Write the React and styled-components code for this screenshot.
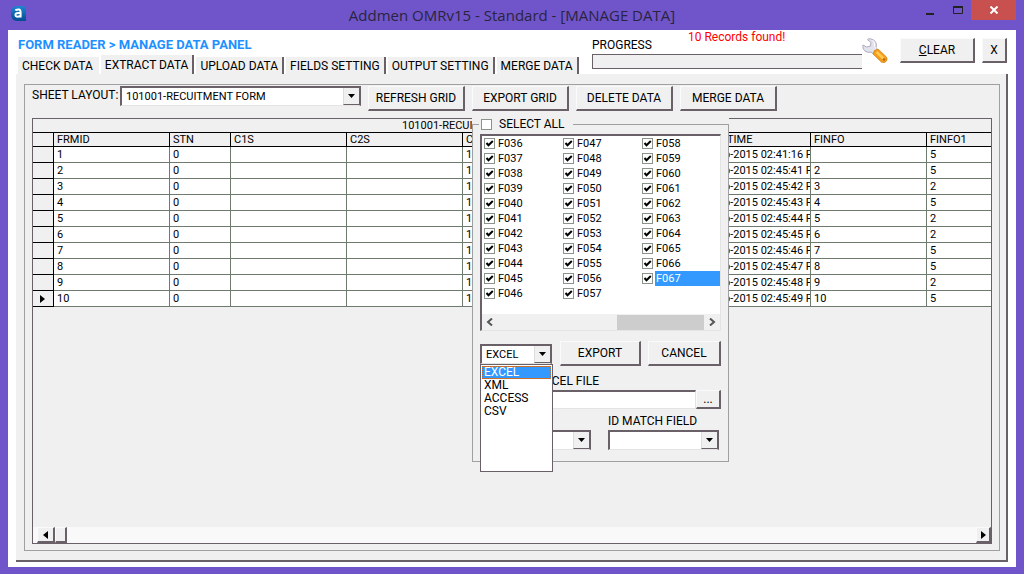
import React, { useState } from 'react'
import styled, { createGlobalStyle, css } from 'styled-components'

const face = '#f0f0f0'
const purple = '#6f55c9'
const dark = '#6a6068'
const line = '#a0a0a0'
const blue = '#3399ff'

const raised = css`
  border: solid;
  border-width: 1px 2px 2px 1px;
  border-color: #fafafa ${dark} ${dark} #fafafa;
  background: ${face};
`
const sunken = css`
  border: solid;
  border-width: 2px 1px 1px 2px;
  border-color: ${dark} #e4e4e4 #e4e4e4 ${dark};
  background: #fff;
`
const GlobalStyle = createGlobalStyle`
  * {
    box-sizing: border-box;
  }
  body {
    margin: 0;
    background: ${purple};
    color: #000;
    font: 12px/14px Roboto, Arial, sans-serif;
  }
  button, input, select {
    font: inherit;
    color: inherit;
    margin: 0;
    padding: 0;
    border-radius: 0;
  }
`
const Window = styled.div`
  display: flex;
  flex-direction: column;
  min-height: 100vh;
  padding: 0 8px 7px;
  background: ${purple};
`
const TitleBar = styled.header`
  display: grid;
  grid-template-columns: 100px 1fr 100px;
  height: 30px;
`
const Logo = styled.svg`
  margin: 6px 3px;
`
const WindowTitle = styled.h1`
  margin: 0;
  color: #2a2440;
  font: 15px/30px 'Open Sans', sans-serif;
  text-align: center;
  white-space: nowrap;
`
const WindowButtons = styled.div`
  display: flex;
  justify-content: flex-end;
  align-items: flex-start;
`
const WindowButton = styled.button`
  display: flex;
  align-items: center;
  justify-content: center;
  width: ${p => (p.$close ? 45 : 27)}px;
  height: 20px;
  border: 0;
  background: ${p => (p.$close ? '#c8504e' : 'transparent')};
`
const Client = styled.main`
  display: flex;
  flex-direction: column;
  flex: 1;
  padding: 0 8px 5px;
  background: #fff;
`
const Header = styled.div`
  display: flex;
  height: 44px;
`
const HeaderMain = styled.div`
  display: flex;
  flex-direction: column;
  justify-content: space-between;
  width: 576px;
  padding: 8px 0 0 2px;
`
const PanelTitle = styled.h2`
  margin: 0;
  color: #1e90ff;
  font-size: 13px;
  line-height: 14px;
`
const Tabs = styled.div`
  display: flex;
  align-items: flex-end;
  gap: 2px;
`
const Tab = styled.button`
  height: ${p => (p.$active ? 19 : 17)}px;
  padding: 0 4px;
  border: 0;
  border-right: 2px solid ${p => (p.$first ? face : dark)};
  background: ${face};
  white-space: nowrap;
`
const Progress = styled.div`
  flex: 1;
`
const ProgressRow = styled.div`
  display: flex;
  height: 24px;
`
const ProgressLabel = styled.span`
  width: 96px;
  padding-top: 8px;
`
const Status = styled.span`
  color: #f00;
`
const ProgressTrack = styled.div`
  height: 15px;
  border: 1px solid ${dark};
  border-right: 0;
  background: ${face};
`
const HeaderActions = styled.div`
  display: flex;
  align-items: flex-start;
  gap: 7px;
  padding: 8px 1px 0 0;
`
const Wrench = styled.svg`
  margin-right: 5px;
`
const Button = styled.button`
  ${raised}
  width: ${p => p.$width}px;
  height: ${p => p.$height || 25}px;
  white-space: nowrap;
`
const TabPanel = styled.section`
  display: flex;
  flex: 1;
  padding: 10px 6px 9px 8px;
  border: solid ${dark};
  border-width: 0 2px 2px 0;
  background: ${face};
`
const Frame = styled.div`
  display: flex;
  flex-direction: column;
  flex: 1;
  min-width: 0;
  padding: 1px 7px 6px;
  border: 1px solid ${line};
`
const Toolbar = styled.div`
  display: flex;
  gap: 7px;
  height: 32px;
`
const Label = styled.label`
  display: block;
`
const LayoutField = styled.div`
  display: flex;
  width: 329px;

  label {
    width: 88px;
    padding-top: 2px;
  }
`
const ComboBox = styled.span`
  ${sunken}
  display: flex;
  flex: 1;
  width: ${p => (p.$width ? p.$width + 'px' : 'auto')};
  height: 20px;
  border-right: 2px solid ${dark};
`
const ComboSelect = styled.select`
  flex: 1;
  min-width: 0;
  padding-left: 4px;
  border: 0;
  outline: 0;
  appearance: none;
  background: #fff;
  font-size: 11px;
`
const ComboArrow = styled.span`
  display: flex;
  align-items: center;
  justify-content: center;
  width: 16px;
  border-bottom: 1px solid ${dark};
  border-left: 1px solid #ddd;
  background: ${face};
`
const Workspace = styled.div`
  position: relative;
  display: flex;
  flex: 1;
`
const GridBox = styled.div`
  display: flex;
  flex-direction: column;
  justify-content: space-between;
  flex: 1;
  min-width: 0;
  border: 1px solid ${dark};
`
const Table = styled.table`
  width: 100%;
  table-layout: fixed;
  border-collapse: separate;
  border-spacing: 0;
  font-size: 11px;

  caption {
    height: 13px;
    padding-left: 369px;
    line-height: 14px;
    text-align: left;
  }
`
const cell = css`
  overflow: hidden;
  padding: 0 0 0 3px;
  text-align: left;
  font-weight: 400;
  white-space: nowrap;
`
const HeadCell = styled.th`
  ${cell}
  height: 15px;
  padding-left: 3px;
  border: solid #000;
  border-width: 1px 1px 1px 0;
  line-height: 13px;

  &:last-child {
    border-right: 0;
  }
`
const Cell = styled.td`
  ${cell}
  height: 16px;
  padding-left: ${p => (p.$flush ? 0 : 3)}px;
  border: solid #6f7a6f;
  border-width: 0 1px 1px 0;
  background: #fff;
  line-height: 15px;

  &:last-child {
    border-right: 0;
  }
`
const RowHandle = styled.td`
  padding: 0 0 0 7px;
  border: solid #000;
  border-width: 0 1px 1px 0;

  svg {
    display: block;
  }
`
const GridScroll = styled.div`
  display: flex;
  height: 16px;
  padding-left: 4px;
  background: #f9f9f9;
`
const GridScrollButton = styled.button`
  ${raised}
  display: flex;
  align-items: center;
  justify-content: center;
  width: ${p => p.$width}px;
  margin-left: ${p => (p.$end ? 'auto' : 0)};
`
const Dialog = styled.div`
  position: absolute;
  top: -1px;
  left: 440px;
  width: 257px;
  background: ${face};
`
const Group = styled.fieldset`
  min-width: 0;
  margin: 0;
  padding: 2px 7px 11px;
  border: 1px solid ${line};

  legend {
    height: 15px;
    margin-left: -1px;
    padding: 0 8px 0 2px;
    background: ${face};
  }
`
const CheckLabel = styled.label`
  display: flex;
  align-items: center;
  gap: ${p => p.$gap || 2}px;
  height: 15px;
`
const CheckText = styled.span`
  flex: 1;
  padding-left: 1px;
  font-size: ${p => (p.$big ? 12 : 11)}px;
  line-height: 15px;
  background: ${p => (p.$selected ? blue : 'transparent')};
  color: ${p => (p.$selected ? '#fff' : '#000')};
`
const Checkbox = styled.input.attrs({ type: 'checkbox' })`
  width: 11px;
  height: 11px;
  border: 1px solid #8b948b;
  appearance: none;
  background: #fff;

  &:checked {
    background: #fff
      url("data:image/svg+xml,%3Csvg xmlns='http://www.w3.org/2000/svg' viewBox='0 0 9 9'%3E%3Cpath d='M1.5 4l2 2.2L7.8 2' fill='none' stroke='%23000' stroke-width='2'/%3E%3C/svg%3E");
  }
`
const FieldList = styled.div`
  ${sunken}
  height: 197px;
  display: flex;
  flex-direction: column;
  justify-content: space-between;
`
const FieldGrid = styled.div`
  display: grid;
  grid-template-columns: 79px 79px 1fr;
  grid-template-rows: repeat(11, 15px);
  grid-auto-flow: column;
  padding-left: 2px;
`
const ListScroll = styled.div`
  display: flex;
  align-items: center;
  height: 16px;
  padding: 0 4px;
  background: ${face};
`
const ListThumb = styled.div`
  width: 87px;
  height: 15px;
  margin: 0 5px 0 auto;
  background: #cdcdcd;
`
const ExportRow = styled.div`
  display: flex;
  gap: 7px;
  margin: 10px 0 8px;
`
const FormatField = styled.div`
  position: relative;
  width: 73px;
  padding-top: 3px;
`
const FormatMenu = styled.ul`
  position: absolute;
  top: 23px;
  left: 0;
  z-index: 1;
  width: 73px;
  height: 108px;
  margin: 0;
  padding: 1px;
  border: 1px solid ${dark};
  background: #fff;
  list-style: none;
`
const FormatOption = styled.li`
  height: 13px;
  padding-left: 2px;
  line-height: 13px;
  background: ${p => (p.$selected ? blue : 'transparent')};
  color: ${p => (p.$selected ? '#fff' : '#000')};
  outline: ${p => (p.$selected ? '1px dotted #c46a28' : 'none')};
  outline-offset: -1px;
`
const FileLabel = styled(Label)`
  width: 119px;
  margin-bottom: 2px;
  text-align: right;
`
const FileRow = styled.div`
  display: flex;
  margin-bottom: 5px;
`
const FileInput = styled.input`
  ${sunken}
  flex: 1;
  min-width: 0;
  height: 19px;
`
const MatchRow = styled.div`
  display: flex;
  align-items: flex-end;
  gap: 17px;
`
const MatchField = styled.div`
  width: 111px;

  label {
    margin-bottom: 2px;
  }
`

const tabs = [
  'CHECK DATA',
  'EXTRACT DATA',
  'UPLOAD DATA',
  'FIELDS SETTING',
  'OUTPUT SETTING',
  'MERGE DATA'
]
const columns = [
  ['', 21],
  ['FRMID', 116],
  ['STN', 61],
  ['C1S', 116],
  ['C2S', 116],
  ['C3S', 261],
  ['TIME', 87],
  ['FINFO', 116],
  ['FINFO1', 0]
]
const records = [
  ['1', '02:41:16', '', '5'],
  ['2', '02:45:41', '2', '5'],
  ['3', '02:45:42', '3', '2'],
  ['4', '02:45:43', '4', '5'],
  ['5', '02:45:44', '5', '2'],
  ['6', '02:45:45', '6', '2'],
  ['7', '02:45:46', '7', '5'],
  ['8', '02:45:47', '8', '5'],
  ['9', '02:45:48', '9', '2'],
  ['10', '02:45:49', '10', '5']
]
const fields = Array.from({ length: 32 }, (_, i) => `F0${36 + i}`)
const formats = ['EXCEL', 'XML', 'ACCESS', 'CSV']

const Combo = ({ id, options = [], width, ...rest }) => (
  <ComboBox $width={width}>
    <ComboSelect id={id} {...rest}>
      {options.map(o => (
        <option key={o}>{o}</option>
      ))}
    </ComboSelect>
    <ComboArrow aria-hidden="true">
      <svg width="7" height="4">
        <path d="M0 0h7L3.5 4z" />
      </svg>
    </ComboArrow>
  </ComboBox>
)

const Triangle = ({ left }) => (
  <svg width="5" height="8" aria-hidden="true">
    <path d={left ? 'M5 0v8L0 4z' : 'M0 0v8l5-4z'} />
  </svg>
)

const Chevron = ({ left }) => (
  <svg width="7" height="8" fill="none" stroke="#555" strokeWidth="2">
    <path d={left ? 'M6 0.5L2 4l4 3.5' : 'M1 0.5L5 4 1 7.5'} />
  </svg>
)

const AppTitleBar = () => (
  <TitleBar>
    <Logo width="15" height="15" viewBox="0 0 15 15" aria-hidden="true">
      <defs>
        <linearGradient id="logo" x1="0" y1="0" x2="0" y2="1">
          <stop offset="0" stopColor="#1f86d0" />
          <stop offset="1" stopColor="#044a90" />
        </linearGradient>
      </defs>
      <path d="M6 0h5a4 4 0 0 1 4 4v11H6a6 6 0 0 1-6-6V6a6 6 0 0 1 6-6z" fill="url(#logo)" />
      <path
        d="M4.3 4.2Q9.6 2 9.6 6v5.5M9.6 7Q4.4 6.5 4.4 9q.2 2.8 5 .8"
        fill="none"
        stroke="#fff"
        strokeWidth="2"
      />
    </Logo>
    <WindowTitle>Addmen OMRv15 - Standard - [MANAGE DATA]</WindowTitle>
    <WindowButtons>
      <WindowButton aria-label="Minimize">
        <svg width="9" height="10">
          <path d="M0 8h8v2H0z" fill="#222" />
        </svg>
      </WindowButton>
      <WindowButton aria-label="Maximize">
        <svg width="10" height="8">
          <path d="M.5 1h9v6.5h-9z" fill="none" stroke="#222" />
          <path d="M0 0h10v2H0z" fill="#222" />
        </svg>
      </WindowButton>
      <WindowButton $close aria-label="Close">
        <svg width="8" height="8" stroke="#fff" strokeWidth="2">
          <path d="M.5.5l7 7M7.5.5l-7 7" />
        </svg>
      </WindowButton>
    </WindowButtons>
  </TitleBar>
)

const WrenchIcon = () => (
  <Wrench width="26" height="25" viewBox="0 0 26 25" aria-hidden="true">
    <path
      d="M1 7C0 11.500 4 15.500 9 14l3 2.500 4-4-2-3C15.500 4.500 12 .5 6.500.8l-1 .8L9 4.500 8.500 8 4.500 9z"
      fill="#e2e3ec"
      stroke="#a9abbd"
    />
    <path d="M11 2.500q2.500 2 1.500 6l2 3" fill="none" stroke="#fff" strokeWidth="1" />
    <path
      d="M11 16q.5-4.500 5-5l8 7.500q2 2 .5 4.500t-5 1.200z"
      fill="#f59c1a"
      stroke="#c9851f"
      strokeWidth="0.700"
    />
    <path d="M14.500 14l7 6.500" stroke="#ffc94f" strokeWidth="2.500" />
    <circle cx="22" cy="21.500" r="1.200" fill="#b86a10" />
  </Wrench>
)

const DataGrid = () => (
  <GridBox>
    <Table>
      <caption>101001-RECUITMENT FORM</caption>
      <colgroup>
        {columns.map(([name, width]) => (
          <col key={name} width={width || undefined} />
        ))}
      </colgroup>
      <thead>
        <tr>
          {columns.map(([name]) => (
            <HeadCell key={name}>{name}</HeadCell>
          ))}
        </tr>
      </thead>
      <tbody>
        {records.map(([id, time, info, info1], i) => (
          <tr key={id}>
            <RowHandle>{i === records.length - 1 && <Triangle />}</RowHandle>
            <Cell>{id}</Cell>
            <Cell>0</Cell>
            <Cell />
            <Cell />
            <Cell>1</Cell>
            <Cell $flush>p-2015 {time} P</Cell>
            <Cell>{info}</Cell>
            <Cell>{info1}</Cell>
          </tr>
        ))}
      </tbody>
    </Table>
    <GridScroll>
      <GridScrollButton $width={18} aria-label="Scroll left">
        <Triangle left />
      </GridScrollButton>
      <GridScrollButton $width={12} aria-label="Scroll position" />
      <GridScrollButton $width={15} $end aria-label="Scroll right">
        <Triangle />
      </GridScrollButton>
    </GridScroll>
  </GridBox>
)

const ExportDialog = () => {
  const [checked, setChecked] = useState(fields)
  const [format, setFormat] = useState('EXCEL')

  const toggle = name =>
    setChecked(
      checked.includes(name)
        ? checked.filter(f => f !== name)
        : [...checked, name]
    )

  return (
    <Dialog>
      <Group>
        <legend>
          <CheckLabel $gap={6}>
            <Checkbox onChange={e => setChecked(e.target.checked ? fields : [])} />
            <CheckText $big>SELECT ALL</CheckText>
          </CheckLabel>
        </legend>
        <FieldList>
          <FieldGrid>
            {fields.map(name => (
              <CheckLabel key={name}>
                <Checkbox
                  checked={checked.includes(name)}
                  onChange={() => toggle(name)}
                />
                <CheckText $selected={name === 'F067'}>{name}</CheckText>
              </CheckLabel>
            ))}
          </FieldGrid>
          <ListScroll>
            <Chevron left />
            <ListThumb />
            <Chevron />
          </ListScroll>
        </FieldList>
        <ExportRow>
          <FormatField>
            <Combo
              aria-label="Format"
              options={formats}
              width={72}
              value={format}
              onChange={e => setFormat(e.target.value)}
            />
            <FormatMenu>
              {formats.map(f => (
                <FormatOption
                  key={f}
                  $selected={f === format}
                  onClick={() => setFormat(f)}
                >
                  {f}
                </FormatOption>
              ))}
            </FormatMenu>
          </FormatField>
          <Button $width={81}>EXPORT</Button>
          <Button $width={73}>CANCEL</Button>
        </ExportRow>
        <FileLabel htmlFor="file">SELECT EXCEL FILE</FileLabel>
        <FileRow>
          <FileInput id="file" />
          <Button $width={25} $height={19} aria-label="Browse">
            ...
          </Button>
        </FileRow>
        <MatchRow>
          <MatchField>
            <Combo aria-label="Sheet" />
          </MatchField>
          <MatchField>
            <Label htmlFor="match">ID MATCH FIELD</Label>
            <Combo id="match" />
          </MatchField>
        </MatchRow>
      </Group>
    </Dialog>
  )
}

const App = () => {
  const [active, setActive] = useState('EXTRACT DATA')

  return (
    <>
      <GlobalStyle />
      <Window>
        <AppTitleBar />
        <Client>
          <Header>
            <HeaderMain>
              <PanelTitle>FORM READER &gt; MANAGE DATA PANEL</PanelTitle>
              <Tabs role="tablist">
                {tabs.map((name, i) => (
                  <Tab
                    key={name}
                    role="tab"
                    $first={i === 0}
                    $active={name === active}
                    aria-selected={name === active}
                    onClick={() => setActive(name)}
                  >
                    {name}
                  </Tab>
                ))}
              </Tabs>
            </HeaderMain>
            <Progress>
              <ProgressRow>
                <ProgressLabel>PROGRESS</ProgressLabel>
                <Status>10 Records found!</Status>
              </ProgressRow>
              <ProgressTrack />
            </Progress>
            <HeaderActions>
              <WrenchIcon />
              <Button $width={75}>
                <u>C</u>LEAR
              </Button>
              <Button $width={25}>X</Button>
            </HeaderActions>
          </Header>
          <TabPanel>
            <Frame>
              <Toolbar>
                <LayoutField>
                  <Label htmlFor="layout">SHEET LAYOUT:</Label>
                  <Combo id="layout" options={['101001-RECUITMENT FORM']} />
                </LayoutField>
                <Button $width={97}>REFRESH GRID</Button>
                <Button $width={97}>EXPORT GRID</Button>
                <Button $width={97}>DELETE DATA</Button>
                <Button $width={97}>MERGE DATA</Button>
              </Toolbar>
              <Workspace>
                <DataGrid />
                <ExportDialog />
              </Workspace>
            </Frame>
          </TabPanel>
        </Client>
      </Window>
    </>
  )
}

export default App
